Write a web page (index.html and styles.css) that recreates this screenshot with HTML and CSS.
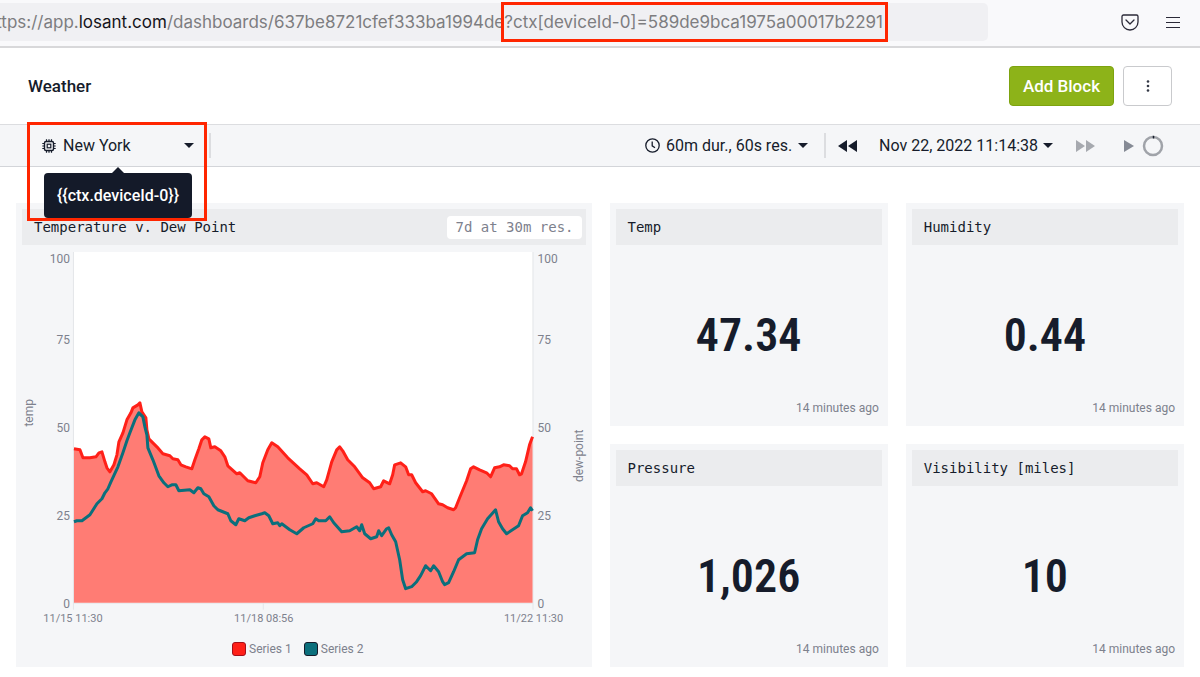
FILE: index.html
```html
<!DOCTYPE html>
<html lang="en">
<head>
    <meta charset="UTF-8">
    <meta name="viewport" content="width=device-width, initial-scale=1.0">
    <title>Weather</title>
    <link rel="stylesheet" href="styles.css">
</head>
<body>

<div class="browser-bar">
    <div class="url-bar">
        <span>https://app.<span class="url-host">losant.com</span>/dashboards/637be8721cfef333ba1994de</span><span class="url-query">?ctx[deviceId-0]=589de9bca1975a00017b2291</span>
    </div>
    <div class="browser-actions">
        <button class="icon-button" aria-label="Pocket">
            <svg width="18" height="17" viewBox="0 0 18 17" fill="none" stroke="#2b2a38" stroke-linecap="round" stroke-linejoin="round">
                <path d="M2.5 1h13A1.5 1.5 0 0 1 17 2.500V8A8 8 0 0 1 1 8V2.500A1.500 1.500 0 0 1 2.500 1Z" stroke-width="1.300"/>
                <path d="M5 6l4 4 4-4" stroke-width="1.300"/>
            </svg>
        </button>
        <button class="icon-button" aria-label="Menu">
            <svg width="16" height="13" viewBox="0 0 16 13" stroke="#2b2a38" stroke-width="1.200">
                <path d="M1 1.500h14M1 6.500h14M1 11.500h14"/>
            </svg>
        </button>
    </div>
</div>

<header class="page-header">
    <h1>Weather</h1>
    <div class="page-actions">
        <button class="btn btn-primary">Add Block</button>
        <button class="btn btn-menu" aria-label="Dashboard menu">
            <svg width="4" height="12" viewBox="0 0 4 12" fill="#333845">
                <circle cx="2" cy="1.500" r="1.300"/><circle cx="2" cy="6" r="1.300"/><circle cx="2" cy="10.500" r="1.300"/>
            </svg>
        </button>
    </div>
</header>

<div class="toolbar">
    <div class="device-picker">
        <svg width="14" height="14" viewBox="0 0 14 14" fill="none" stroke="#161c2b">
            <rect x="2.500" y="2.500" width="9" height="9" rx="1.500" stroke-width="1.400"/>
            <rect x="5.200" y="5.200" width="3.600" height="3.600" stroke-width="1.200"/>
            <path d="M4.500 .3v2M7 .3v2M9.500 .3v2M4.500 11.700v2M7 11.700v2M9.500 11.700v2M.3 4.500h2M.3 7h2M.3 9.500h2M11.700 4.500h2M11.700 7h2M11.700 9.500h2" stroke-width="1.200"/>
        </svg>
        <select aria-label="Device">
            <option>New York</option>
        </select>
        <svg class="caret" width="10" height="5" viewBox="0 0 10 5"><path d="M0 0h10L5 5Z"/></svg>
        <div class="tooltip" role="tooltip">{{ctx.deviceId-0}}</div>
        <div class="highlight"></div>
    </div>
    <div class="time-controls">
        <button class="time-button duration">
            <svg width="15" height="15" viewBox="0 0 15 15" fill="none" stroke="#161c2b" stroke-width="1.300">
                <circle cx="7.500" cy="7.500" r="6.700"/><path d="M7.200 3.500v4.300l2.800 2"/>
            </svg>
            60m dur., 60s res.
            <svg class="caret" width="10" height="5" viewBox="0 0 10 5"><path d="M0 0h10L5 5Z"/></svg>
        </button>
        <button class="time-button rewind" aria-label="Back">
            <svg width="19" height="12" viewBox="0 0 19 12" fill="#161c2b"><path d="M9 0v12L0 6ZM19 0v12L10 6Z"/></svg>
        </button>
        <button class="time-button">
            Nov 22, 2022 11:14:38
            <svg class="caret" width="10" height="5" viewBox="0 0 10 5"><path d="M0 0h10L5 5Z"/></svg>
        </button>
        <button class="time-button forward" aria-label="Forward">
            <svg width="19" height="12" viewBox="0 0 19 12" fill="#a6a9af"><path d="M0 0v12L9 6ZM10 0v12L19 6Z"/></svg>
        </button>
        <button class="time-button play" aria-label="Play">
            <svg width="10" height="12" viewBox="0 0 10 12" fill="#858a95"><path d="M0 0v12L10 6Z"/></svg>
            <svg width="22" height="22" viewBox="0 0 22 22" fill="none">
                <circle cx="11" cy="11" r="9" stroke="#a0a3a9" stroke-width="2.500"/>
                <path d="M11.500 .8v2.700" stroke="#161c2b" stroke-width="1.500"/>
            </svg>
        </button>
    </div>
</div>

<main class="dashboard">
    <section class="block block-chart">
        <div class="block-header">
            <h2>Temperature v. Dew Point</h2>
            <span class="badge">7d at 30m res.</span>
        </div>
        <svg class="chart" viewBox="22 245 564 384" role="img" aria-label="Temperature and dew point">
            <rect x="74" y="252" width="459" height="351" fill="#fff"/>
            <path class="axis" d="M73.500 252V610M533.500 252V610M73.500 603.500H533.500M263.500 603V610"/>
            <path class="area" d="M74 449L80 450 83 458 90 458 96 457 99 453 102 452 105 462 107 468 110 472 114 465 117 455 119 442 123 433 127 420 131 413 133 408 138 405 140 403 142 412 146 418 147 430 149 439 157 447 163 454 170 456 173 459 178 460 181 465 186 467 192 469 195 460 199 449 202 440 205 437 209 439 211 448 215 447 221 451 225 457 228 466 237 474 240 473 248 481 256 483 260 477 263 463 268 450 272 443 278 447 288 458 300 469 307 475 313 484 317 483 324 487 327 480 332 462 337 450 340 447 343 451 348 460 355 467 363 478 370 483 374 489 381 487 384 481 390 484 393 475 395 465 401 463 406 467 409 475 412 475 416 483 423 492 426 491 432 494 439 504 443 505 448 508 454 510 456 508 460 498 467 481 471 469 474 467 480 470 487 473 491 477 495 468 500 467 504 465 510 466 513 469 517 469 520 475 522 474 526 462 530 445 533 437V603H74Z"/>
            <path class="line line-temp" d="M74 449L80 450 83 458 90 458 96 457 99 453 102 452 105 462 107 468 110 472 114 465 117 455 119 442 123 433 127 420 131 413 133 408 138 405 140 403 142 412 146 418 147 430 149 439 157 447 163 454 170 456 173 459 178 460 181 465 186 467 192 469 195 460 199 449 202 440 205 437 209 439 211 448 215 447 221 451 225 457 228 466 237 474 240 473 248 481 256 483 260 477 263 463 268 450 272 443 278 447 288 458 300 469 307 475 313 484 317 483 324 487 327 480 332 462 337 450 340 447 343 451 348 460 355 467 363 478 370 483 374 489 381 487 384 481 390 484 393 475 395 465 401 463 406 467 409 475 412 475 416 483 423 492 426 491 432 494 439 504 443 505 448 508 454 510 456 508 460 498 467 481 471 469 474 467 480 470 487 473 491 477 495 468 500 467 504 465 510 466 513 469 517 469 520 475 522 474 526 462 530 445 533 437"/>
            <path class="line line-dew" d="M74 522L77 521 82 521 90 515 97 504 102 499 105 493 108 489 111 482 118 467 123 453 127 441 130 433 135 420 139 413 143 417 145 427 147 435 148 448 153 460 159 476 164 483 168 487 172 485 176 485 179 491 190 490 194 493 198 488 201 489 204 494 209 497 214 506 218 510 228 514 231 521 236 525 239 519 245 521 249 518 255 516 262 514 265 513 269 516 273 524 278 523 280 526 282 524 290 530 297 534 304 528 313 524 316 519 319 521 326 521 330 517 334 523 342 532 350 531 357 527 360 531 362 525 365 534 371 539 377 537 379 531 382 536 387 529 389 528 392 535 396 542 400 560 403 580 406 589 412 587 417 582 421 576 426 566 431 571 434 566 439 572 443 582 445 585 449 583 454 572 459 560 467 554 475 553 478 540 482 529 488 519 496 510 499 522 503 529 507 534 519 526 523 516 528 513 531 508 533 511"/>
            <g class="labels" text-anchor="end">
                <text x="70" y="263">100</text>
                <text x="70" y="344">75</text>
                <text x="70" y="432">50</text>
                <text x="70" y="520">25</text>
                <text x="70" y="608">0</text>
            </g>
            <g class="labels">
                <text x="538" y="263">100</text>
                <text x="538" y="344">75</text>
                <text x="538" y="432">50</text>
                <text x="538" y="520">25</text>
                <text x="538" y="608">0</text>
            </g>
            <g class="labels dates" text-anchor="middle">
                <text x="73" y="622">11/15 11:30</text>
                <text x="264" y="622">11/18 08:56</text>
                <text x="534" y="622">11/22 11:30</text>
            </g>
            <g class="labels" text-anchor="middle">
                <text transform="translate(33 413) rotate(-90)">temp</text>
                <text transform="translate(584 456) rotate(-90)">dew-point</text>
            </g>
        </svg>
        <ul class="legend">
            <li><span class="swatch swatch-temp"></span>Series 1</li>
            <li><span class="swatch swatch-dew"></span>Series 2</li>
        </ul>
    </section>

    <section class="block">
        <div class="block-header"><h2>Temp</h2></div>
        <p class="value">47.34</p>
        <p class="updated">14 minutes ago</p>
    </section>

    <section class="block">
        <div class="block-header"><h2>Humidity</h2></div>
        <p class="value">0.44</p>
        <p class="updated">14 minutes ago</p>
    </section>

    <section class="block">
        <div class="block-header"><h2>Pressure</h2></div>
        <p class="value">1,026</p>
        <p class="updated">14 minutes ago</p>
    </section>

    <section class="block">
        <div class="block-header"><h2>Visibility [miles]</h2></div>
        <p class="value">10</p>
        <p class="updated">14 minutes ago</p>
    </section>
</main>

</body>
</html>
```
FILE: styles.css
```css
* {
    box-sizing: border-box;
}
body {
    margin: 0;
    font-family: Roboto, "Noto Sans", sans-serif;
    font-size: 16px;
    color: #161c2b;
    background-color: #fff;
}
h1, h2, p, ul {
    margin: 0;
    padding: 0;
}
button, select {
    font: inherit;
    color: inherit;
    background: none;
    border: none;
    padding: 0;
    cursor: pointer;
}
svg {
    display: block;
    flex-shrink: 0;
}

/* browser chrome */
.browser-bar {
    display: flex;
    justify-content: space-between;
    height: 48px;
    padding: 3px 19px 4px 0;
    background-color: #f9f9fb;
    border-bottom: 2px solid #d8d8da;
}
.url-bar {
    display: flex;
    flex: 0 1 988px;
    align-items: center;
    justify-content: flex-end;
    min-width: 0;
    height: 38px;
    padding-right: 103px;
    border-radius: 0 5px 5px 0;
    background-color: #f0f0f3;
    color: #7d7d80;
    font-family: Inter, sans-serif;
    font-size: 17px;
    line-height: 34px;
    white-space: nowrap;
}
.url-host {
    color: #15141a;
}
.url-query {
    padding-right: 2px;
    outline: 3px solid #ff2600;
}
.browser-actions {
    display: flex;
    align-items: center;
    gap: 26px;
}

/* page header */
.page-header {
    display: flex;
    align-items: center;
    justify-content: space-between;
    height: 76px;
    padding: 0 28px;
}
h1 {
    font-size: 17px;
    font-weight: 500;
}
.page-actions {
    display: flex;
    gap: 9px;
}
.btn {
    display: flex;
    align-items: center;
    justify-content: center;
    height: 40px;
    border-radius: 4px;
}
.btn-primary {
    padding: 0 13px;
    border: 1px solid #7da30f;
    background-color: #8db319;
    color: #fff;
    font-size: 17px;
    font-weight: 500;
}
.btn-menu {
    width: 49px;
    border: 1px solid #c9cacd;
    background-color: #fff;
}

/* toolbar */
.toolbar {
    display: flex;
    align-items: center;
    justify-content: space-between;
    height: 43px;
    padding: 0 36px 0 27px;
    border-top: 1px solid #dcdde0;
    border-bottom: 1px solid #d3d5d9;
    background-color: #f5f6f8;
}
.device-picker {
    position: relative;
    display: flex;
    align-items: center;
    width: 184px;
    height: 25px;
    padding: 0 15px;
    border-right: 2px solid #dcdde0;
}
.device-picker select {
    flex: 1;
    margin-left: 7px;
    appearance: none;
}
.caret {
    fill: #161c2b;
}
.tooltip {
    position: absolute;
    top: 40px;
    left: 17px;
    width: 148px;
    border-radius: 4px;
    background-color: #141a29;
    color: #fff;
    font-weight: 500;
    line-height: 45px;
    text-align: center;
}
.tooltip::before {
    content: "";
    position: absolute;
    top: -6px;
    left: 68px;
    border: 6px solid transparent;
    border-top: none;
    border-bottom-color: #141a29;
}
.highlight {
    position: absolute;
    top: -11px;
    left: 0;
    width: 180px;
    height: 99px;
    border: 3px solid #ff2600;
    pointer-events: none;
}
.time-controls {
    display: flex;
    align-items: center;
}
.time-button {
    display: flex;
    align-items: center;
    gap: 5px;
}
.duration {
    gap: 6px;
    height: 25px;
    padding-right: 16px;
    border-right: 2px solid #dcdde0;
}
.rewind {
    margin: 0 22px 0 12px;
}
.forward {
    margin: 0 29px 0 23px;
}
.play {
    gap: 8px;
}

/* dashboard blocks */
.dashboard {
    display: grid;
    grid-template-columns: 575fr 278fr 278fr;
    grid-auto-rows: minmax(223px, auto);
    gap: 18px;
    padding: 36px 16px 10px;
}
.block {
    display: flex;
    flex-direction: column;
    min-width: 0;
    padding: 6px;
    background-color: #f5f6f8;
}
.block-chart {
    grid-row: span 2;
}
.block-header {
    display: flex;
    align-items: center;
    justify-content: space-between;
    height: 36px;
    padding: 0 4px 0 12px;
    background-color: #ebecee;
}
h2 {
    font-family: "DejaVu Sans Mono", monospace;
    font-size: 14px;
    font-weight: 400;
}
.badge {
    padding: 0 8px;
    border-radius: 4px;
    background-color: #fff;
    color: #7d818d;
    font-family: "DejaVu Sans Mono", monospace;
    font-size: 14px;
    line-height: 23px;
}
.value {
    flex: 1;
    padding-top: 60px;
    font-family: "Roboto Condensed", Roboto, sans-serif;
    font-size: 46px;
    font-weight: 600;
    line-height: 60px;
    text-align: center;
}
.updated {
    padding: 0 3px 4px;
    color: #7d818d;
    font-size: 12px;
    line-height: 16px;
    text-align: right;
}

/* chart */
.chart {
    width: 100%;
    overflow: visible;
}
.axis {
    fill: none;
    stroke: #e4e6e9;
}
.area {
    fill: #ff7c74;
}
.line {
    fill: none;
    stroke-width: 3;
    stroke-linejoin: round;
}
.line-temp {
    stroke: #ff2018;
}
.line-dew {
    stroke: #0b6f7c;
}
.labels {
    fill: #7d818d;
    font-size: 12px;
}
.dates {
    font-size: 11px;
}
.legend {
    display: flex;
    justify-content: center;
    gap: 12px;
    padding: 13px 12px 0 0;
    list-style: none;
    color: #7d818d;
    font-size: 12px;
}
.legend li {
    display: flex;
    align-items: center;
    gap: 3px;
}
.swatch {
    width: 14px;
    height: 14px;
    border: 1px solid #a30f1a;
    border-radius: 3px;
    background-color: #ff2018;
}
.swatch-dew {
    border-color: #161c2b;
    background-color: #0b6f7c;
}
```
